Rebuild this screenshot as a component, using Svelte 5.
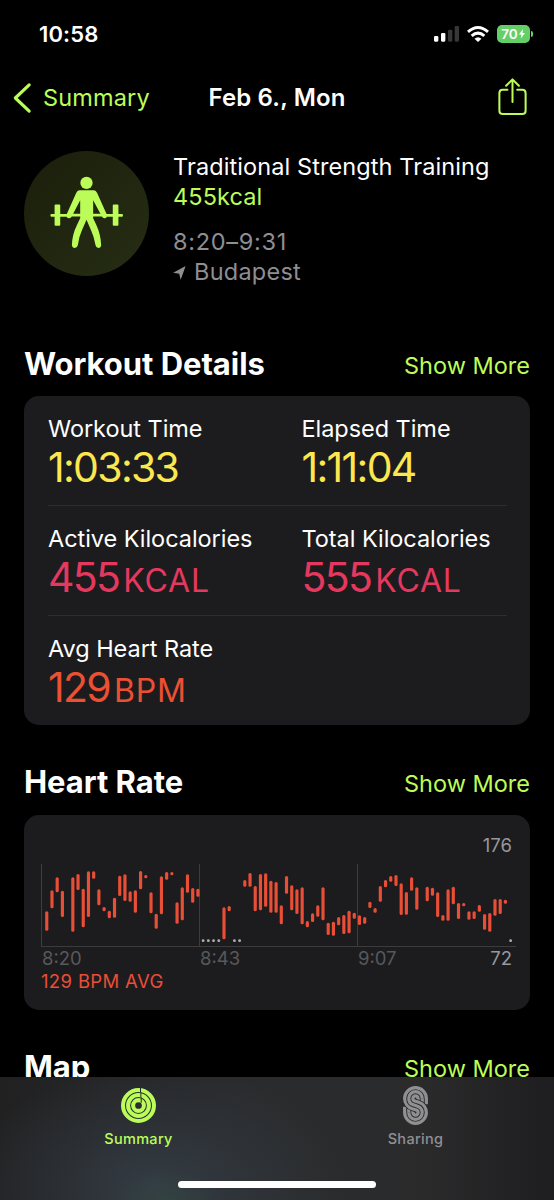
<script lang="ts">
    type Stat = { label: string; value: string; unit?: string; tone: string };

    const rows: Stat[][] = [
        [
            { label: "Workout Time", value: "1:03:33", tone: "yellow" },
            { label: "Elapsed Time", value: "1:11:04", tone: "yellow" },
        ],
        [
            { label: "Active Kilocalories", value: "455", unit: "KCAL", tone: "pink" },
            { label: "Total Kilocalories", value: "555", unit: "KCAL", tone: "pink" },
        ],
        [{ label: "Avg Heart Rate", value: "129", unit: "BPM", tone: "orange" }],
    ];

    // [slot, top, bottom] of each heart rate range, in chart units
    const ranges = [
        [0, 183, 241], [1, 120, 174], [2, 81, 126], [3, 121, 200], [5, 81, 244],
        [6, 71, 119], [7, 115, 231], [8, 63, 200], [9, 63, 85], [10, 117, 165],
        [11, 170, 183], [12, 181, 204], [13, 142, 202], [14, 76, 137], [15, 72, 152],
        [16, 123, 154], [17, 120, 187], [18, 62, 117], [19, 74, 84], [20, 126, 189],
        [21, 190, 235], [22, 78, 192], [23, 65, 88], [24, 65, 75], [25, 156, 220],
        [26, 111, 210], [27, 72, 127], [28, 113, 157], [29, 115, 139], [34, 171, 267],
        [35, 167, 183], [38, 89, 109], [39, 68, 109], [40, 107, 183], [41, 71, 180],
        [42, 69, 169], [43, 91, 187], [44, 95, 187], [45, 165, 222], [46, 77, 130],
        [47, 105, 180], [48, 117, 191], [49, 111, 222], [50, 212, 231], [51, 189, 215],
        [52, 165, 199], [53, 111, 210], [54, 217, 254], [55, 214, 256], [56, 200, 225],
        [57, 194, 251], [58, 181, 249], [59, 187, 205], [60, 195, 224], [61, 200, 220],
        [62, 154, 173], [63, 173, 187], [64, 107, 154], [65, 89, 111], [66, 77, 94],
        [67, 74, 107], [68, 99, 194], [69, 125, 193], [70, 81, 121], [71, 111, 178],
        [73, 109, 153], [74, 112, 136], [75, 126, 200], [76, 194, 211], [77, 117, 211],
        [78, 109, 162], [79, 158, 206], [80, 158, 168], [81, 183, 208], [82, 183, 206],
        [83, 164, 184], [84, 191, 238], [85, 188, 244], [86, 146, 196], [87, 146, 191],
        [88, 148, 160],
    ];
    const gaps = [30, 31, 32, 33, 36, 37, 89];

    const slotX = (slot: number) => 50.3 + slot * 15.636;

    // stripes of the Sharing logo, widest first
    const stripes = [
        { color: "#fff", width: 34 },
        { color: "#000", width: 15 },
        { color: "#fff", width: 9.5 },
    ];
</script>

<div class="screen">
    <header class="status">
        <span class="clock">10:58</span>
        <div class="status-icons">
            <svg class="signal" viewBox="0 0 75 48">
                <rect x="0" y="30" width="13" height="17" rx="3.5" fill="#fff" />
                <rect x="21" y="21" width="13" height="26" rx="3.5" fill="#fff" />
                <rect x="42" y="11" width="13" height="36" rx="3.5" fill="#373737" />
                <rect x="62" y="0" width="13" height="47" rx="3.5" fill="#373737" />
            </svg>
            <svg class="wifi" viewBox="0 0 66 48">
                <g fill="none" stroke="#fff" stroke-width="9">
                    <path d="M3 17.500Q33 -8.500 63 17.500" />
                    <path d="M14 29.500Q33 13 52 29.500" />
                </g>
                <path d="M22.500 38Q33 29 43.500 38L33 48Z" fill="#fff" />
            </svg>
            <div class="battery">
                <span>70</span>
                <svg viewBox="0 0 18 28"><path d="M12 0 0 16h7.500L5.500 28 18 11.500h-7.500z" fill="#fff" /></svg>
            </div>
        </div>
    </header>

    <nav class="nav">
        <div class="back">
            <svg viewBox="0 0 54 90"><path d="M48.500 5.500 7 45l41.500 39.500" /></svg>
            <span>Summary</span>
        </div>
        <h1>Feb 6., Mon</h1>
        <svg class="share" viewBox="0 0 86 110">
            <path d="M28 35H14Q4 35 4 45V97Q4 107 14 107H72Q82 107 82 97V45Q82 35 72 35H57" />
            <path d="M43 71V5M24 23 43 4 62 23" />
        </svg>
    </nav>

    <section class="hero">
        <div class="badge">
            <svg viewBox="72 33 376 376">
                <circle cx="260" cy="129" r="18.500" />
                <path d="M239 151Q232 152 229 159L200 224Q198 233 206 235 213 236 216 229L241 181V235L232 254Q217 284 216 316 217 325 225 325 233 324 234 316 237 291 246 272L260 240 274 272Q283 291 287 316 288 324 296 325 304 324 304 316 303 284 289 254L280 235V181L306 229Q309 236 316 235 323 233 321 224L292 159Q289 152 282 151Z" />
                <path d="M153 222.500H204V230.500H153Q149.500 226.500 153 222.500ZM316 222.500H368Q372 226.500 368 230.500H316ZM204 222H244V230H204ZM278 222H316V230H278Z" />
                <rect x="164" y="194" width="17" height="64" rx="3" />
                <rect x="339" y="194" width="17" height="64" rx="3" />
            </svg>
        </div>
        <div class="hero-text">
            <p class="name">Traditional Strength Training</p>
            <p class="energy">455kcal</p>
            <p class="muted times">8:20–9:31</p>
            <p class="muted place">
                <svg viewBox="0 0 37 41"><path d="M36.500 0 0 20l17.500 3L22 40.500Z" /></svg>
                <span>Budapest</span>
            </p>
        </div>
    </section>

    <section>
        <div class="section-head first">
            <h2>Workout Details</h2>
            <span class="more">Show More</span>
        </div>
        <div class="card details">
            {#each rows as row}
                <div class="row">
                    {#each row as stat}
                        <div class="stat">
                            <p class="label">{stat.label}</p>
                            <p class="value {stat.tone}">
                                {stat.value}{#if stat.unit}<span class="unit">{stat.unit}</span>{/if}
                            </p>
                        </div>
                    {/each}
                </div>
            {/each}
        </div>
    </section>

    <section>
        <div class="section-head">
            <h2>Heart Rate</h2>
            <span class="more">Show More</span>
        </div>
        <div class="card heart">
            <p class="max">176</p>
            <svg class="chart" viewBox="33 41 1425 249">
                <g stroke="#3d3d40" stroke-width="3">
                    <path d="M34.500 41V289M508.500 41V289M982.500 41V289M33 288.500H1458" />
                </g>
                <g fill="#e94e36">
                    {#each ranges as [slot, top, bottom]}
                        <rect x={slotX(slot) - 4.75} y={top} width="9.5" height={bottom - top} rx="4.5" />
                    {/each}
                </g>
                <g fill="#aeaeb2">
                    {#each gaps as slot}
                        <circle cx={slotX(slot)} cy="271" r="4.3" />
                    {/each}
                </g>
            </svg>
            <div class="axis">
                <span>8:20</span>
                <span>8:43</span>
                <span>9:07</span>
                <span class="min">72</span>
            </div>
            <p class="avg">129 BPM AVG</p>
        </div>
    </section>

    <section>
        <div class="section-head">
            <h2>Map</h2>
            <span class="more">Show More</span>
        </div>
    </section>

    <footer class="tabs">
        <div class="tab active">
            <svg viewBox="-52 -52 104 104">
                <g fill="none" stroke="currentColor" stroke-width="12">
                    <circle r="46" />
                    <circle r="31" />
                    <circle r="16" />
                </g>
                <path d="M6 -53V-40M7 -38V-25M8 -23V-8" stroke="#28292c" stroke-width="3" />
            </svg>
            <span>Summary</span>
        </div>
        <div class="tab">
            <svg viewBox="363 173 104 104">
                <mask id="stripes" maskUnits="userSpaceOnUse" x="363" y="160" width="104" height="130">
                    <g fill="none">
                        {#each stripes as { color, width }}
                            <path d="M435 221V203M395 247V229" stroke={color} stroke-width={width} />
                        {/each}
                        <path d="M395 204A20 20 0 0 0 408.900 223.050L421.100 226.950A20 20 0 0 1 435 246" stroke="#000" stroke-width="39" />
                        {#each stripes as { color, width }}
                            <path d="M435 205V204A20 20 0 0 0 395 204A20 20 0 0 0 408.900 223.050L421.100 226.950A20 20 0 0 1 435 246A20 20 0 0 1 395 246V245" stroke={color} stroke-width={width} />
                        {/each}
                    </g>
                </mask>
                <rect x="363" y="160" width="104" height="130" fill="currentColor" mask="url(#stripes)" />
            </svg>
            <span>Sharing</span>
        </div>
        <div class="home"></div>
    </footer>
</div>

<style>
    :global(body) {
        background: #000;
    }

    .screen {
        position: relative;
        width: 554px;
        height: 1200px;
        overflow: hidden;
        background: #000;
        color: #fff;
        font-family: Inter, "Liberation Sans", sans-serif;
        font-size: 23.5px;
        line-height: 30px;
    }

    h1,
    h2,
    p {
        margin: 0;
    }

    svg {
        display: block;
        overflow: visible;
        flex: none;
    }

    .status {
        display: flex;
        justify-content: space-between;
        align-items: center;
        height: 68px;
        padding: 0 24.5px 0 39px;
        box-sizing: border-box;
    }

    .clock {
        font-size: 22px;
        font-weight: 600;
        letter-spacing: 0.15px;
    }

    .status-icons {
        display: flex;
        align-items: center;
    }

    .signal {
        width: 25px;
        height: 16px;
    }

    .wifi {
        width: 22px;
        height: 16px;
        margin-left: 8px;
    }

    .battery {
        position: relative;
        display: flex;
        align-items: center;
        justify-content: center;
        gap: 1px;
        width: 33px;
        height: 18px;
        margin-left: 7.5px;
        border-radius: 5px;
        background: #65cf67;
        font-size: 13.5px;
        font-weight: 600;
        line-height: 18px;
    }

    .battery svg {
        width: 6px;
        height: 9.5px;
    }

    .battery::after {
        content: "";
        position: absolute;
        right: -3.5px;
        top: 6px;
        width: 2px;
        height: 6px;
        border-radius: 0 2px 2px 0;
        background: #65cf67;
    }

    .nav {
        display: grid;
        grid-template-columns: 1fr auto 1fr;
        align-items: center;
        height: 60px;
        padding: 0 27px;
    }

    .back {
        display: flex;
        align-items: center;
        gap: 12px;
        margin-left: -14px;
        color: #bbfc58;
        letter-spacing: 0.15px;
    }

    .back svg {
        width: 18px;
        height: 30px;
    }

    .back path {
        fill: none;
        stroke: currentColor;
        stroke-width: 9.5;
        stroke-linecap: round;
        stroke-linejoin: round;
    }

    h1 {
        font-size: 24px;
        font-weight: 600;
        line-height: 30px;
        letter-spacing: 0.15px;
    }

    .share {
        justify-self: end;
        width: 29px;
        height: 37px;
        margin-top: -3px;
        fill: none;
        stroke: #bbfc58;
        stroke-width: 6;
        stroke-linecap: round;
        stroke-linejoin: round;
    }

    .hero {
        display: flex;
        gap: 24px;
        padding: 23px 24px 0;
    }

    .badge {
        flex: none;
        width: 125px;
        height: 125px;
        border-radius: 50%;
        background: linear-gradient(135deg, #1b1e0b, #262e14);
    }

    .badge svg {
        width: 125px;
        height: 125px;
        fill: #bbfc58;
    }

    .hero-text {
        padding-top: 1px;
        white-space: nowrap;
        letter-spacing: 0.1px;
    }

    .energy {
        color: #bbfc58;
    }

    .muted {
        color: #8e8e93;
    }

    .times {
        margin-top: 15px;
        letter-spacing: 0.7px;
    }

    .place {
        display: flex;
        align-items: center;
        gap: 8px;
        letter-spacing: 0.25px;
    }

    .place svg {
        width: 13px;
        height: 14px;
        margin-top: 2px;
        fill: currentColor;
    }

    .section-head {
        display: flex;
        justify-content: space-between;
        align-items: flex-start;
        height: 53px;
        margin-top: 37px;
        padding: 0 24px;
    }

    .section-head.first {
        height: 52px;
        margin-top: 57px;
    }

    h2 {
        font-size: 31px;
        font-weight: 700;
        line-height: 40px;
        letter-spacing: -0.05px;
    }

    .more {
        padding-top: 7px;
        color: #bbfc58;
    }

    .card {
        margin: 0 24px;
        border-radius: 15px;
        background: #1c1c1e;
    }

    .details {
        height: 329px;
        padding: 0 23px 0 24px;
        box-sizing: border-box;
    }

    .row {
        display: grid;
        grid-template-columns: 253.5px 1fr;
        padding: 18px 0 14px;
        border-bottom: 1px solid #2e2e31;
        white-space: nowrap;
    }

    .row:last-child {
        border-bottom: 0;
    }

    .label {
        letter-spacing: -0.05px;
    }

    .value {
        height: 47px;
        font-size: 41px;
        line-height: 47px;
        letter-spacing: -1.7px;
    }

    .unit {
        margin-left: 4px;
        font-size: 32px;
        line-height: 1;
        letter-spacing: 0.8px;
    }

    .yellow {
        color: #fde74f;
    }

    .pink {
        color: #e5385f;
    }

    .orange {
        color: #eb5033;
    }

    .heart {
        height: 195px;
        padding: 18px 14px 0 17px;
        box-sizing: border-box;
        font-size: 18.5px;
        line-height: 24px;
    }

    .max {
        padding-right: 4px;
        color: #98989d;
        text-align: right;
    }

    .chart {
        width: 475px;
        height: 83px;
        margin-top: 7px;
    }

    .axis {
        display: grid;
        grid-template-columns: 158px 158px 1fr auto;
        height: 23px;
        margin-top: -1px;
        padding: 0 4px 0 1px;
        color: #58585b;
    }

    .min {
        color: #98989d;
    }

    .avg {
        color: #e94e36;
        letter-spacing: 0.35px;
    }

    .tabs {
        position: absolute;
        left: 0;
        bottom: 0;
        display: grid;
        grid-template-columns: 1fr 1fr;
        width: 100%;
        height: 123px;
        background:
            radial-gradient(ellipse 60px 30px at 165px 123px, rgba(52, 72, 66, 0.6), transparent),
            radial-gradient(ellipse 190px 120px at 155px 108px, #333b43, transparent),
            linear-gradient(90deg, #212122, #2a2b2d 45%, #2b2b2c 75%, #1e1e20);
    }

    .tab {
        display: flex;
        flex-direction: column;
        align-items: center;
        padding-top: 10.5px;
        color: #909092;
        font-size: 14.5px;
        font-weight: 500;
        line-height: 20px;
        letter-spacing: 0.3px;
    }

    .tab svg {
        width: 35px;
        height: 35px;
    }

    .tab span {
        margin-top: 6.5px;
    }

    .tab.active {
        color: #bbfc58;
    }

    .home {
        position: absolute;
        left: 178px;
        bottom: 12px;
        width: 198px;
        height: 7px;
        border-radius: 4px;
        background: #fff;
    }
</style>
